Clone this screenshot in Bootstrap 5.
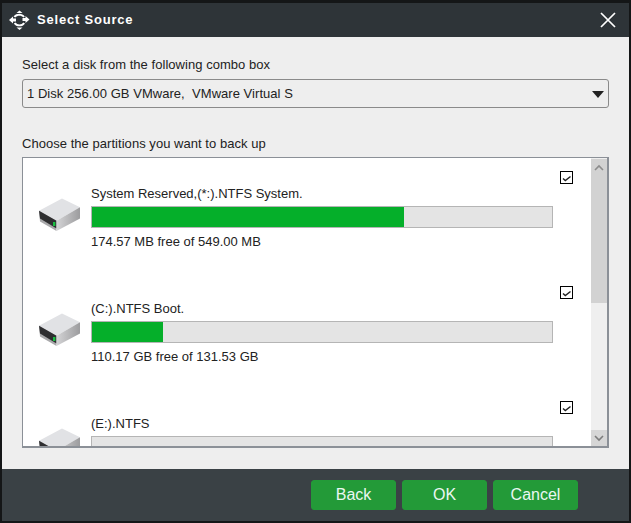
<!DOCTYPE html>
<html lang="en">
<head>
<meta charset="utf-8">
<title>Select Source</title>
<link rel="stylesheet" href="https://cdn.jsdelivr.net/npm/bootstrap@5.3.0/dist/css/bootstrap.min.css">
<style>
html,body{height:100%;overflow:hidden}
body{background:#141617;padding:3px 2px 2px;font-family:"Liberation Sans",Arial,sans-serif;font-size:13px;color:#222}
.dlg{height:518px;display:flex;flex-direction:column;background:#eeeeee}
.dlg-head{height:34px;flex:none;background:#2e3438;color:#fff;padding:0 13px 0 7px}
.dlg-title{font-weight:700;font-size:13px;letter-spacing:.8px;margin-left:7px}
.dlg-body{flex:1;min-height:0;padding:21px 20px 21px;display:flex;flex-direction:column}
.lbl{line-height:14px;height:14px;letter-spacing:.04px}
.combo{height:29px;margin-top:7px;border:1px solid #8a8a8a;border-radius:3px;padding:1px 4px 0 4px;letter-spacing:.04px}
.caret{width:0;height:0;border-left:6px solid transparent;border-right:6px solid transparent;border-top:7px solid #222}
.lbl2{margin-top:29px}
.plist{margin-top:6px;height:291px;flex:none;border:1px solid #8b9097;border-width:1px 2px 2px 1px;background:#fff;overflow:hidden;position:relative}
.prow{height:115px;flex:none;position:relative;padding:29px 0 0 68px}
.prow .ptitle{line-height:14px;height:14px}
.pbar{width:462px;height:22px;margin-top:5px;border:1px solid #b5b5b5;background:#e4e4e4;border-radius:0}
.pbar .progress-bar{background:#05af2a}
.pfree{line-height:14px;margin-top:7px}
.hdd{position:absolute;left:15px;top:40px}
.chk{position:absolute;left:537px;top:13px;width:13px;height:13px;border:1px solid #000;background:#fff;display:block}
.sbar{position:absolute;right:0;top:0;bottom:0;width:16px;background:#efefef}
.sthumb{position:absolute;top:1px;left:0;right:0;height:144px;background:#d2d2d2}
.sbtn{position:absolute;left:0;right:0;height:16px;display:flex;align-items:center;justify-content:center}
.sup{top:1px}
.sdown{bottom:0;background:#d6d6d6}
.dlg-foot{height:52px;flex:none;background:#3a4145;padding:11px 51px 0 0;gap:6px}
.fbtn{width:85px;height:30px;padding:0;font-size:16px;line-height:28px;background:#239a38;border-color:#239a38;color:#eaf7f2;border-radius:3px}
</style>
</head>
<body>
<div class="dlg">
  <div class="dlg-head d-flex align-items-center">
    <svg width="21" height="22" viewBox="0 0 21 22" fill="#fff" aria-hidden="true">
      <path d="M10.5 1.5 13.5 4H7.5Z"/>
      <path d="M10.5 21 7.5 18.5H13.5Z"/>
      <path d="M0 11 4 7.5V9.5H7V12.5H4V14.5Z"/>
      <path d="M20.5 10.5 16.5 7V9H13.5V12H16.5V14Z"/>
      <path d="M4.5 7.5C6 5.5 8 4.8 10.5 4.8 12.5 4.8 14.5 5.6 15.8 7.5L14.3 8.6C13.4 7.3 12 6.7 10.5 6.7 8.8 6.7 7.3 7.3 6.3 8.6Z"/>
      <path d="M4.8 14.5C6 16.5 8 17.3 10.5 17.3 12.8 17.3 14.8 16.5 16 14.5L14.3 13.5C13.5 14.8 12 15.4 10.5 15.4 9 15.4 7.4 14.8 6.5 13.5Z"/>
    </svg>
    <span class="dlg-title">Select Source</span>
    <svg class="ms-auto" width="16" height="16" viewBox="0 0 16 16" stroke="#fff" stroke-width="1.7" aria-hidden="true"><path d="M1 1 15 15M15 1 1 15"/></svg>
  </div>
  <div class="dlg-body">
    <div class="lbl">Select a disk from the following combo box</div>
    <div class="combo d-flex align-items-center justify-content-between">
      <span>1 Disk 256.00 GB VMware,&nbsp; VMware Virtual S</span><span class="caret"></span>
    </div>
    <div class="lbl lbl2">Choose the partitions you want to back up</div>
    <div class="plist d-flex flex-column">
      <svg width="0" height="0" class="position-absolute" aria-hidden="true">
        <defs>
          <linearGradient id="sideGrad" x1="0" x2="1" y1="0" y2="0"><stop offset="0" stop-color="#d4d4d6"/><stop offset="1" stop-color="#9c9c9e"/></linearGradient>
          <symbol id="hddIcon" viewBox="0 0 43 34">
            <path d="M1 12.7 24 .5 42 9.3 18.5 22.7Z" fill="#e1e2e5"/>
            <path d="M1 12.7 18.5 22.7V33L2 23.5Z" fill="#a9a9ab"/>
            <path d="M1 12.7 18.5 22.7V30.5L2 20.5Z" fill="#2e2e30"/>
            <path d="M18.5 22.7 42 9.3V20.5L18.5 33Z" fill="url(#sideGrad)"/>
            <rect x="15" y="24" width="2.4" height="4" fill="#17c040"/>
          </symbol>
        </defs>
      </svg>
      <div class="prow">
        <svg class="hdd" width="43" height="34" aria-hidden="true"><use href="#hddIcon"/></svg>
        <span class="chk"><svg width="11" height="11" viewBox="0 0 11 11" fill="none" stroke="#222" stroke-width="1.5" class="d-block"><path d="M2 6.5 4.3 8.5 9.5 4.5"/></svg></span>
        <div class="ptitle">System Reserved,(*:).NTFS System.</div>
        <div class="progress pbar"><div class="progress-bar" style="width:67.8%"></div></div>
        <div class="pfree">174.57 MB free of 549.00 MB</div>
      </div>
      <div class="prow">
        <svg class="hdd" width="43" height="34" aria-hidden="true"><use href="#hddIcon"/></svg>
        <span class="chk"><svg width="11" height="11" viewBox="0 0 11 11" fill="none" stroke="#222" stroke-width="1.5" class="d-block"><path d="M2 6.5 4.3 8.5 9.5 4.5"/></svg></span>
        <div class="ptitle">(C:).NTFS Boot.</div>
        <div class="progress pbar"><div class="progress-bar" style="width:15.5%"></div></div>
        <div class="pfree">110.17 GB free of 131.53 GB</div>
      </div>
      <div class="prow">
        <svg class="hdd" width="43" height="34" aria-hidden="true"><use href="#hddIcon"/></svg>
        <span class="chk"><svg width="11" height="11" viewBox="0 0 11 11" fill="none" stroke="#222" stroke-width="1.5" class="d-block"><path d="M2 6.5 4.3 8.5 9.5 4.5"/></svg></span>
        <div class="ptitle">(E:).NTFS</div>
        <div class="progress pbar"></div>
      </div>
      <div class="sbar">
        <div class="sthumb"></div>
        <div class="sbtn sup"><svg width="10" height="7" viewBox="0 0 10 7" fill="none" stroke="#8c8c8c" stroke-width="1.6"><path d="M1 6 5 2 9 6"/></svg></div>
        <div class="sbtn sdown"><svg width="10" height="7" viewBox="0 0 10 7" fill="none" stroke="#7c7c7c" stroke-width="1.6"><path d="M1 1 5 5 9 1"/></svg></div>
      </div>
    </div>
  </div>
  <div class="dlg-foot d-flex justify-content-end align-items-start">
    <button type="button" class="btn btn-success fbtn">Back</button>
    <button type="button" class="btn btn-success fbtn">OK</button>
    <button type="button" class="btn btn-success fbtn">Cancel</button>
  </div>
</div>
<script src="https://cdn.jsdelivr.net/npm/bootstrap@5.3.0/dist/js/bootstrap.bundle.min.js"></script>
</body>
</html>
